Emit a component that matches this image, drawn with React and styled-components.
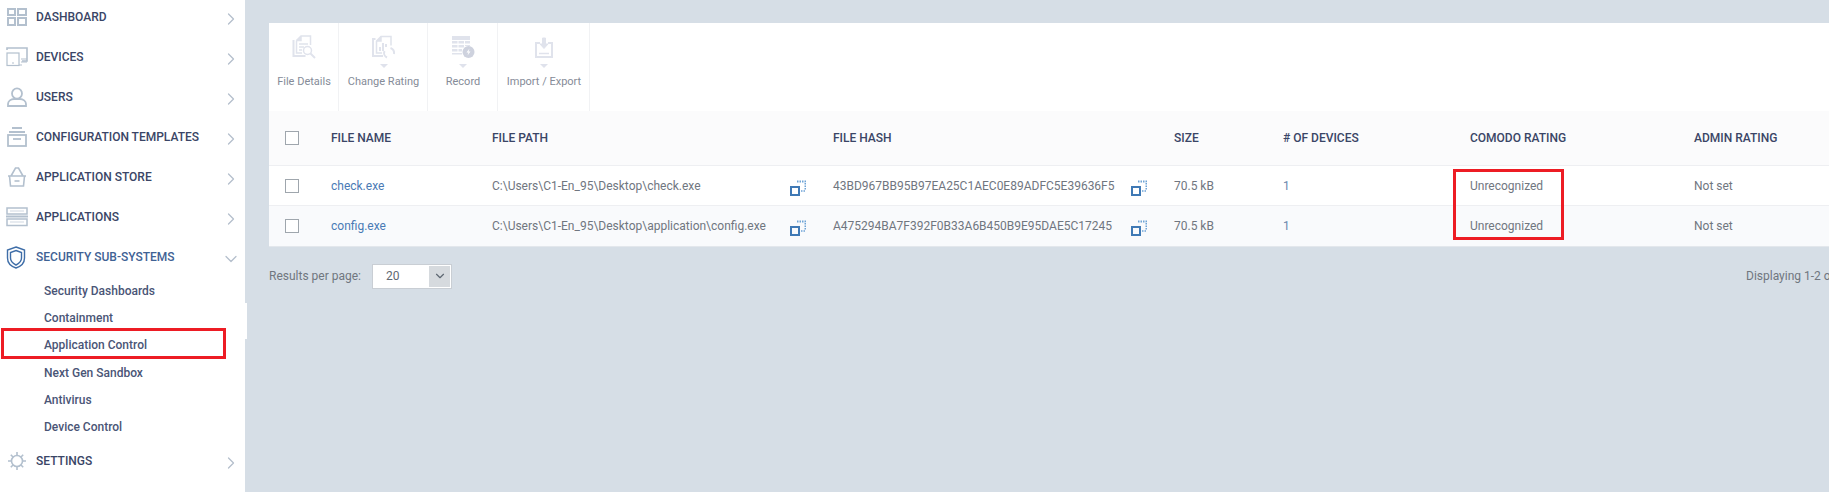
import React from 'react'
import styled, { createGlobalStyle } from 'styled-components'
import { ChevronRight, ChevronDown } from 'lucide-react'

const GlobalStyle = createGlobalStyle`
  html, body {
    margin: 0;
    height: 100%;
    overflow: hidden;
    background: #d6dee6;
    font-family: Roboto, "Liberation Sans", sans-serif;
  }
`

const DashboardIcon = () => (
  <svg width="22" height="20" viewBox="0 0 22 20" fill="none" stroke="#b3c0ce" strokeWidth="2">
    <rect x="2" y="2" width="7" height="6" />
    <rect x="12" y="2" width="8" height="6" />
    <rect x="2" y="11" width="7" height="7" />
    <rect x="12" y="11" width="8" height="7" />
  </svg>
)
const DevicesIcon = () => (
  <svg width="22" height="20" viewBox="0 0 22 20" fill="none" stroke="#b3c0ce" strokeWidth="1.2">
    <path d="M1 3V1h20v13h-5" strokeWidth="1.6" />
    <rect x="1" y="6" width="12" height="12.5" />
    <path d="M6 16h2" />
    <path d="M15 12h6M15 15h6M13 18h3" />
  </svg>
)
const UserIcon = () => (
  <svg width="22" height="20" viewBox="0 0 22 20" fill="none" stroke="#b3c0ce" strokeWidth="1.8">
    <ellipse cx="11" cy="6.5" rx="5" ry="5.2" />
    <path d="M2 19v-2c0-3 3-5 6-5h6c3 0 6 2 6 5v2z" />
  </svg>
)
const TemplatesIcon = () => (
  <svg width="22" height="20" viewBox="0 0 22 20" fill="none" stroke="#b3c0ce" strokeWidth="1.8">
    <path d="M6 1h10M3 5h16" />
    <rect x="2" y="8" width="18" height="11" />
    <path d="M7 12h8" />
  </svg>
)
const BasketIcon = () => (
  <svg width="22" height="20" viewBox="0 0 22 20" fill="none" stroke="#b3c0ce" strokeWidth="1.6">
    <path d="M2 9h18M5 9L9.500 1h3L17 9" />
    <path d="M3.500 9l1 10h13l1-10" />
    <path d="M8.500 14h5" />
  </svg>
)
const ApplicationsIcon = () => (
  <svg width="22" height="20" viewBox="0 0 22 20" fill="none" stroke="#b3c0ce" strokeWidth="1.500">
    <rect x="1" y="1" width="20" height="6" />
    <rect x="1" y="12" width="20" height="6.500" />
    <path d="M0 9.500h22" strokeWidth="2" />
    <path d="M4 4h14M4 15h14" stroke="#dfe5eb" strokeWidth="1.500" />
  </svg>
)
const ShieldIcon = () => (
  <svg width="20" height="23" viewBox="0 0 20 23" fill="none" stroke="#3f6ea8" strokeWidth="1.4">
    <path d="M10 1l8.500 3v8c0 5-4 8.500-8.500 10C5.500 20.500 1.500 17 1.500 12V4z" />
    <path d="M10 4.500l5.500 2v5.500c0 3.500-2.500 5.500-5.500 7-3-1.500-5.500-3.500-5.500-7V6.500z" />
  </svg>
)
const GearIcon = () => (
  <svg width="22" height="20" viewBox="0 0 22 20" fill="none" stroke="#b3c0ce" strokeWidth="1.600">
    <circle cx="11" cy="10" r="5.500" />
    <path d="M11 1v3M11 16v3M2 10h3M17 10h3M4.800 3.800l2.200 2.200M15 14l2.200 2.200M17.200 3.800L15 6M7 14l-2.200 2.200" />
  </svg>
)

const FileDetailsIcon = () => (
  <svg width="24" height="24" viewBox="0 0 24 24" fill="none" stroke="#e0e3ec" strokeWidth="1.500">
    <path d="M1.500 5v16h12" strokeWidth="2" />
    <path d="M4.500 5.500L9 1h9.500v9" />
    <path d="M4.500 5.500V18H10" />
    <path d="M4.500 5.500H9V1" fill="#e0e3ec" />
    <path d="M7 9h9M7 12h5M7 15h3" />
    <circle cx="15.500" cy="15.500" r="4" />
    <path d="M18.500 18.500l4.500 4.500" strokeWidth="2" />
  </svg>
)
const ChangeRatingIcon = () => (
  <svg width="24" height="24" viewBox="0 0 24 24" fill="none" stroke="#e0e3ec" strokeWidth="1.500">
    <path d="M3.500 4H1v17h10" strokeWidth="2" />
    <path d="M4.500 6L9 1.500h10v9" />
    <path d="M4.500 6H9V1.500" fill="#e0e3ec" />
    <path d="M4.500 6v12H10" />
    <path d="M8 16v-4M11 16V8M14 12V9" strokeWidth="2" />
    <path d="M15 22.500a5 5 0 0 1-2.500-6.500M18.500 13a5.500 5.500 0 0 1 3.500 6" strokeWidth="2" />
  </svg>
)
const RecordIcon = () => (
  <svg width="24" height="24" viewBox="0 0 24 24" fill="#e0e3ec">
    <rect x="1" y="1" width="18" height="4" />
    <path d="M1 6h5.500v2.500H1zM7.500 6H13v2.500H7.500zM14 6h5v2.500h-5zM1 10h5.500v2.500H1zM7.500 10H13v2.500H7.500zM14 10h5v1h-5zM1 14h5.500v2.500H1zM7.500 14H11v2.500H7.500zM1 18h10v1.500H1z" />
    <circle cx="17.500" cy="17" r="6" fill="#ced2de" />
    <path d="M18.500 13.500l-3 4h2l-1 3 3-4h-2z" fill="#fff" />
  </svg>
)
const ImportIcon = () => (
  <svg width="24" height="24" viewBox="0 0 24 24" fill="none" stroke="#e0e3ec" strokeWidth="2">
    <path d="M8 8H4v14h16V8h-4" />
    <path d="M7 18.500h10" strokeWidth="1.500" />
    <path d="M10.500 3h3v6h2.500l-4 4.500L8 9h2.500z" fill="#e0e3ec" strokeWidth="1" />
  </svg>
)

const CopyIcon = () => (
  <svg width="16" height="16" viewBox="0 0 16 16" fill="none">
    <rect x="1" y="7" width="8" height="8" stroke="#3f79b5" strokeWidth="2" />
    <path d="M7 1.500h8.500V10" stroke="#6ea3d6" strokeWidth="2" strokeDasharray="1.500 1" />
    <path d="M11 11h4" stroke="#6ea3d6" strokeWidth="1.500" strokeDasharray="1.500 1" />
  </svg>
)

const navTop = [
  { label: 'DASHBOARD', icon: <DashboardIcon /> },
  { label: 'DEVICES', icon: <DevicesIcon /> },
  { label: 'USERS', icon: <UserIcon /> },
  { label: 'CONFIGURATION TEMPLATES', icon: <TemplatesIcon /> },
  { label: 'APPLICATION STORE', icon: <BasketIcon /> },
  { label: 'APPLICATIONS', icon: <ApplicationsIcon /> }
]

const subItems = [
  'Security Dashboards',
  'Containment',
  'Application Control',
  'Next Gen Sandbox',
  'Antivirus',
  'Device Control'
]

const tools = [
  { label: 'File Details', icon: <FileDetailsIcon />, width: 70 },
  { label: 'Change Rating', icon: <ChangeRatingIcon />, width: 89, caret: true },
  { label: 'Record', icon: <RecordIcon />, width: 70, caret: true },
  { label: 'Import / Export', icon: <ImportIcon />, width: 92, caret: true }
]

const files = [
  {
    name: 'check.exe',
    path: 'C:\\Users\\C1-En_95\\Desktop\\check.exe',
    hash: '43BD967BB95B97EA25C1AEC0E89ADFC5E39636F5'
  },
  {
    name: 'config.exe',
    path: 'C:\\Users\\C1-En_95\\Desktop\\application\\config.exe',
    hash: 'A475294BA7F392F0B33A6B450B9E95DAE5C17245'
  }
]

export default function App () {
  return (
    <Page>
      <GlobalStyle />
      <Sidebar>
        {navTop.map((item) => (
          <NavRow key={item.label}>
            <NavIcon>{item.icon}</NavIcon>
            <NavLabel>{item.label}</NavLabel>
            <Arrow><ChevronRight size={20} color="#b4bfcc" strokeWidth={1.5} /></Arrow>
          </NavRow>
        ))}
        <NavRow>
          <NavIcon><ShieldIcon /></NavIcon>
          <NavLabel active>SECURITY SUB-SYSTEMS</NavLabel>
          <Arrow><ChevronDown size={20} color="#b4bfcc" strokeWidth={1.5} /></Arrow>
        </NavRow>
        <SubList>
          {subItems.map((item) => (
            <SubItem key={item} marked={item === 'Application Control'}>{item}</SubItem>
          ))}
        </SubList>
        <NavRow>
          <NavIcon><GearIcon /></NavIcon>
          <NavLabel>SETTINGS</NavLabel>
          <Arrow><ChevronRight size={20} color="#b4bfcc" strokeWidth={1.5} /></Arrow>
        </NavRow>
      </Sidebar>

      <Main>
        <Card>
          <Toolbar>
            {tools.map((tool) => (
              <Tool key={tool.label} width={tool.width}>
                <ToolIcon>{tool.icon}</ToolIcon>
                <Caret visible={tool.caret} />
                <ToolLabel>{tool.label}</ToolLabel>
              </Tool>
            ))}
          </Toolbar>
          <HeadRow>
            <CheckCell><Checkbox /></CheckCell>
            <HeadCell>File name</HeadCell>
            <HeadCell>File path</HeadCell>
            <HeadCell>File hash</HeadCell>
            <HeadCell>Size</HeadCell>
            <HeadCell># of devices</HeadCell>
            <HeadCell>Comodo rating</HeadCell>
            <HeadCell>Admin rating</HeadCell>
          </HeadRow>
          {files.map((file, i) => (
            <BodyRow key={file.name} striped={i % 2 === 1}>
              <CheckCell><Checkbox /></CheckCell>
              <FileLink>{file.name}</FileLink>
              <CopyCell>{file.path}<CopyAt><CopyIcon /></CopyAt></CopyCell>
              <CopyCell>{file.hash}<CopyAt><CopyIcon /></CopyAt></CopyCell>
              <Cell>70.5 kB</Cell>
              <Count>1</Count>
              <Cell>Unrecognized</Cell>
              <Cell>Not set</Cell>
            </BodyRow>
          ))}
          <RatingMark />
        </Card>
        <Footer>
          <PerPage>
            <FooterText>Results per page:</FooterText>
            <Select>
              <SelectValue>20</SelectValue>
              <SelectArrow><ChevronDown size={14} color="#5f6872" strokeWidth={2} /></SelectArrow>
            </Select>
          </PerPage>
          <FooterText>Displaying 1-2 of 2 results</FooterText>
        </Footer>
      </Main>
    </Page>
  )
}

const Page = styled.div`
  display: flex;
  width: 1829px;
  height: 492px;
  overflow: hidden;
`

const Sidebar = styled.nav`
  position: relative;
  flex: 0 0 245px;
  height: 495px;
  margin-top: -3px;
  background: #fff;

  &::after {
    content: '';
    position: absolute;
    left: 245px;
    top: 306px;
    width: 2px;
    height: 36px;
    background: #fff;
  }
`

const NavRow = styled.div`
  display: flex;
  align-items: center;
  height: 40px;
  padding: 0 4px 0 6px;
  box-sizing: border-box;
`

const NavIcon = styled.span`
  flex: 0 0 30px;
  display: flex;
  align-items: center;
  height: 24px;
`

const NavLabel = styled.span`
  flex: 1;
  font-size: 12px;
  font-weight: 500;
  color: ${(p) => (p.active ? '#3f6294' : '#3a4566')};
`

const Arrow = styled.span`
  display: flex;
  margin-top: 3px;
`

const SubList = styled.div`
  display: flex;
  flex-direction: column;
  margin-top: 1px;
`

const SubItem = styled.div`
  position: relative;
  width: 225px;
  height: 27.2px;
  line-height: 27.2px;
  margin-left: 1px;
  padding-left: 43px;
  box-sizing: border-box;
  font-size: 12px;
  font-weight: 500;
  color: #4a5576;
  ${(p) => p.marked && `
    &::after {
      content: '';
      position: absolute;
      left: 0;
      right: 0;
      top: -4px;
      bottom: 1px;
      border: 3px solid #ed1c24;
    }
  `}
`

const Main = styled.main`
  flex: 0 0 1640px;
  padding: 23px 0 0 24px;
  box-sizing: border-box;
`

const Card = styled.section`
  position: relative;
  background: #fff;
  border-bottom: 1px solid #e3e7ec;
`

const Toolbar = styled.div`
  display: flex;
  height: 88px;
`

const Tool = styled.div`
  width: ${(p) => p.width}px;
  display: flex;
  flex-direction: column;
  align-items: center;
  padding-top: 12px;
  padding-left: 1px;
  box-sizing: border-box;
  border-right: 1px solid #f1f2f4;
`

const ToolIcon = styled.span`
  display: flex;
  height: 24px;
`

const Caret = styled.span`
  width: 0;
  height: 0;
  margin-top: 5px;
  border-left: 4px solid transparent;
  border-right: 4px solid transparent;
  border-top: 4px solid #dfe2ec;
  visibility: ${(p) => (p.visible ? 'visible' : 'hidden')};
`

const ToolLabel = styled.span`
  margin-top: 7px;
  font-size: 11px;
  color: #858b98;
  white-space: nowrap;
`

const columns = '62px 161px 341px 341px 109px 187px 224px 1fr'

const HeadRow = styled.div`
  display: grid;
  grid-template-columns: ${columns};
  align-items: center;
  height: 54px;
  background: #fbfbfc;
  border-bottom: 1px solid #eeeff2;
`

const BodyRow = styled.div`
  display: grid;
  grid-template-columns: ${columns};
  align-items: center;
  height: 40px;
  box-sizing: border-box;
  background: ${(p) => (p.striped ? '#f9fafc' : '#fff')};
  border-bottom: ${(p) => (p.striped ? '0' : '1px solid #eeeff2')};
`

const CheckCell = styled.div`
  padding-left: 16px;
  display: flex;
`

const Checkbox = styled.span`
  width: 14px;
  height: 14px;
  background: #fff;
  border: 1px solid #9fa6ad;
  box-sizing: border-box;
`

const HeadCell = styled.div`
  font-size: 12px;
  font-weight: 500;
  text-transform: uppercase;
  color: #3a4566;
  white-space: nowrap;
`

const Cell = styled.div`
  font-size: 12px;
  color: #70767f;
  white-space: nowrap;
`

const Count = styled(Cell)`
  color: #6b87ad;
`

const FileLink = styled(Cell)`
  color: #4a7ab5;
`

const CopyCell = styled(Cell)`
  position: relative;
`

const CopyAt = styled.span`
  position: absolute;
  right: 27px;
  top: 1px;
  display: flex;
`

const RatingMark = styled.div`
  position: absolute;
  left: 1184px;
  top: 146px;
  width: 111px;
  height: 71px;
  box-sizing: border-box;
  border: 3px solid #ed1c24;
`

const Footer = styled.footer`
  display: grid;
  grid-template-columns: 1477px auto;
  align-items: center;
  height: 26px;
  margin-top: 16px;
`

const PerPage = styled.div`
  display: flex;
  align-items: center;
  gap: 11px;
`

const FooterText = styled.span`
  font-size: 12px;
  color: #70767f;
  white-space: nowrap;
`

const Select = styled.div`
  display: flex;
  align-items: center;
  justify-content: space-between;
  width: 80px;
  height: 25px;
  box-sizing: border-box;
  padding: 1px;
  background: #fff;
  border: 1px solid #c9ced4;
`

const SelectValue = styled.span`
  padding-left: 12px;
  font-size: 12px;
  color: #5f6872;
`

const SelectArrow = styled.span`
  display: flex;
  align-items: center;
  justify-content: center;
  width: 21px;
  height: 100%;
  background: #d6dade;
`
